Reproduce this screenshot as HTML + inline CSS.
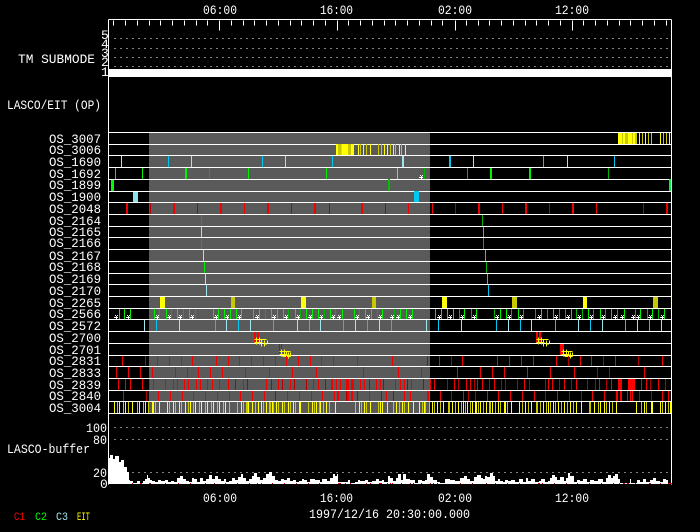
<!DOCTYPE html>
<html><head><meta charset="utf-8"><style>
html,body{margin:0;padding:0;background:#000;width:700px;height:532px;overflow:hidden}
svg{display:block}
text{font-family:"Liberation Mono","DejaVu Sans Mono",monospace;font-size:13px;fill:#fff}
path{fill:none;shape-rendering:crispEdges;stroke-width:1}
rect{shape-rendering:crispEdges}
.c{stroke:#00c8f0}.l{stroke:#a0e4ec}.g{stroke:#00f000}.d{stroke:#00b400}
.r{stroke:#f00000}.k{stroke:#b00000}.y{stroke:#ffff00}.o{stroke:#c8c800}
.w{stroke-width:2}.n{stroke:#fff}
</style></head><body>
<svg width="700" height="532" viewBox="0 0 700 532" xmlns="http://www.w3.org/2000/svg">
<rect x="149" y="132" width="281" height="281" fill="#5a5a5a"/>
<rect x="109" y="69" width="562" height="8" fill="#fff"/>
<g transform="translate(.5 .5)">
<path class="n" d="M108 19V484M671 19V484M108 19H671"/>
<path class="n" d="M113 20v5M125 20v5M137 20v5M149 20v5M160 20v5M172 20v5M184 20v5M196 20v5M207 20v5M219 20v10M231 20v5M243 20v5M254 20v5M266 20v5M278 20v5M290 20v5M301 20v5M313 20v5M325 20v5M337 20v10M348 20v5M360 20v5M372 20v5M384 20v5M395 20v5M407 20v5M419 20v5M431 20v5M442 20v5M455 20v10M466 20v5M478 20v5M489 20v5M501 20v5M513 20v5M525 20v5M536 20v5M548 20v5M560 20v5M572 20v10M583 20v5M595 20v5M607 20v5M619 20v5M630 20v5M642 20v5M654 20v5M666 20v5"/>
<path class="n" stroke-dasharray="1 5" d="M114 38H671M114 48H671M114 57H671M114 66H671M114 427H671M114 439H671M114 472H671"/>
<path class="n" d="M108 132H671M108 144H671M108 155H671M108 167H671M108 179H671M108 191H671M108 202H671M108 214H671M108 226H671M108 237H671M108 249H671M108 261H671M108 273H671M108 284H671M108 296H671M108 308H671M108 319H671M108 331H671M108 343H671M108 355H671M108 366H671M108 378H671M108 390H671M108 401H671M108 413H671"/>
</g>

<!-- OS_3007 -->
<rect x="618" y="133" width="19" height="11" fill="#ff0"/>
<rect x="622" y="133" width="1" height="11" fill="#c8c800"/><rect x="625" y="133" width="3" height="11" fill="#c8c800"/><rect x="632" y="133" width="1" height="11" fill="#c8c800"/><rect x="635" y="133" width="2" height="11" fill="#c8c800"/>
<g transform="translate(.5 133)"><path class="y" d="M639 0v11M645 0v11M660 0v11M669 0v11"/><path class="o" d="M642 0v11M648 0v11M651 0v11M663 0v11M666 0v11"/></g>
<!-- OS_3006 -->
<rect x="336" y="144" width="18" height="11" fill="#ff0"/>
<rect x="338" y="144" width="3" height="11" fill="#c8c800"/><rect x="341" y="144" width="1" height="11" fill="#e4e400"/><rect x="348" y="144" width="3" height="11" fill="#c8c800"/>
<g transform="translate(.5 144)"><path class="y" d="M358 0v11M363 0v11M370 0v11M384 0v11M387 0v11M393 0v11M399 0v11M405 0v11"/><path class="o" d="M360 0v11M366 0v11M378 0v11M381 0v11M390 0v11M395 0v11M401 0v11"/></g>
<!-- OS_1690 -->
<g transform="translate(.5 156)"><path class="l" d="M121 0v11M191 0v11M285 0v11M473 0v11M567 0v11"/><path class="c" d="M168 0v11M262 0v11M332 0v11M543 0v11M614 0v11"/><path class="l w" d="M402.500 0v11"/><path class="c w" d="M449.500 0v11"/></g>
<!-- OS_1692 -->
<g transform="translate(.5 168)"><path class="g" d="M115 0v11M142 0v11M248 0v11M326 0v11"/><path class="d" d="M209 0v11M424 0v11M467 0v11M608 0v11"/><path style="stroke:#70e070" d="M397 0v11"/><path class="g w" d="M185.500 0v11M490.500 0v11M529.500 0v11"/></g>
<!-- OS_1899 / 1900 -->
<rect x="111" y="180" width="3" height="11" fill="#0f0"/><rect x="388" y="179" width="2" height="12" fill="#00c000"/><rect x="669" y="179" width="2" height="12" fill="#00f040"/>
<rect x="133" y="192" width="5" height="10" fill="#8ce0e8"/><rect x="414" y="191" width="5" height="11" fill="#00c8f0"/>
<!-- OS_2048 -->
<g transform="translate(.5 203)"><path class="r" d="M244 0v11M408 0v11M432 0v11M502 0v11M596 0v11"/><path class="k" d="M150 0v11M197 0v11M291 0v11M329 0v11M385 0v11M455 0v11M549 0v11M643 0v11"/><path class="r w" d="M126.500 0v11M173.500 0v11M220.500 0v11M267.500 0v11M314.500 0v11M361.500 0v11M478.500 0v11M525.500 0v11M572.500 0v11M666.500 0v11"/></g>
<!-- OS_2164..2170 -->
<path class="d" d="M201.500 215V226M482.500 215V226"/>
<path class="l" d="M201.500 227V237"/><path class="c" d="M483.500 227V237"/>
<path class="d" d="M201.500 238V249M483.500 238V249"/>
<path class="l" d="M203.500 250V261"/><path class="c" d="M485.500 250V261"/>
<path class="g" d="M204.500 262V273"/><path class="d" d="M486.500 262V273"/>
<path class="l" d="M205.500 274V284"/><path class="c" d="M487.500 274V284"/>
<path class="l" d="M206.500 285V296"/><path class="c" d="M488.500 285V296"/>
<!-- OS_2265 -->
<g fill="#ff0"><rect x="160" y="297" width="5" height="11"/><rect x="301" y="297" width="5" height="11"/><rect x="442" y="297" width="5" height="11"/><rect x="583" y="297" width="4" height="11"/></g>
<g fill="#c8c800"><rect x="231" y="297" width="4" height="11"/><rect x="372" y="297" width="4" height="11"/><rect x="512" y="297" width="5" height="11"/><rect x="653" y="297" width="5" height="11"/></g>
<!-- OS_2566 -->
<g transform="translate(.5 309)"><path class="g" d="M119 0v10M124 0v10M130 0v10M154 0v10M166 0v10M177 0v10M189 0v10M213 0v10M218 0v10M224 0v10M230 0v10M236 0v10M241 0v10M253 0v10M259 0v10M271 0v10M277 0v10M283 0v10M295 0v10M306 0v10M312 0v10M318 0v10M330 0v10M342 0v10M354 0v10M365 0v10M371 0v10M382 0v10M400 0v10M406 0v10M412 0v10M435 0v10M441 0v10M447 0v10M453 0v10M464 0v10M476 0v10M500 0v10M506 0v10M518 0v10M541 0v10M553 0v10M571 0v10M588 0v10M600 0v10M611 0v10M624 0v10M640 0v10M652 0v10M664 0v10"/><path class="d" d="M159 0v10M171 0v10M183 0v10M195 0v10M265 0v10M288 0v10M300 0v10M324 0v10M335 0v10M359 0v10M377 0v10M394 0v10M459 0v10M471 0v10M494 0v10M511 0v10M523 0v10M535 0v10M547 0v10M559 0v10M565 0v10M576 0v10M582 0v10M593 0v10M605 0v10M617 0v10M635 0v10M647 0v10M658 0v10"/></g>
<g transform="translate(0 .5)"><path class="n" d="M116 317m-1-2h1m1 0h1m-2 1h1m-3 1h4m-2 1h1m-2 1h1m1 0h1M128 317m-1-2h1m1 0h1m-2 1h1m-3 1h4m-2 1h1m-2 1h1m1 0h1M157 317m-1-2h1m1 0h1m-2 1h1m-3 1h4m-2 1h1m-2 1h1m1 0h1M169 317m-1-2h1m1 0h1m-2 1h1m-3 1h4m-2 1h1m-2 1h1m1 0h1M180 317m-1-2h1m1 0h1m-2 1h1m-3 1h4m-2 1h1m-2 1h1m1 0h1M192 317m-1-2h1m1 0h1m-2 1h1m-3 1h4m-2 1h1m-2 1h1m1 0h1M216 317m-1-2h1m1 0h1m-2 1h1m-3 1h4m-2 1h1m-2 1h1m1 0h1M227 317m-1-2h1m1 0h1m-2 1h1m-3 1h4m-2 1h1m-2 1h1m1 0h1M239 317m-1-2h1m1 0h1m-2 1h1m-3 1h4m-2 1h1m-2 1h1m1 0h1M257 317m-1-2h1m1 0h1m-2 1h1m-3 1h4m-2 1h1m-2 1h1m1 0h1M274 317m-1-2h1m1 0h1m-2 1h1m-3 1h4m-2 1h1m-2 1h1m1 0h1M286 317m-1-2h1m1 0h1m-2 1h1m-3 1h4m-2 1h1m-2 1h1m1 0h1M298 317m-1-2h1m1 0h1m-2 1h1m-3 1h4m-2 1h1m-2 1h1m1 0h1M310 317m-1-2h1m1 0h1m-2 1h1m-3 1h4m-2 1h1m-2 1h1m1 0h1M321 317m-1-2h1m1 0h1m-2 1h1m-3 1h4m-2 1h1m-2 1h1m1 0h1M333 317m-1-2h1m1 0h1m-2 1h1m-3 1h4m-2 1h1m-2 1h1m1 0h1M339 317m-1-2h1m1 0h1m-2 1h1m-3 1h4m-2 1h1m-2 1h1m1 0h1M357 317m-1-2h1m1 0h1m-2 1h1m-3 1h4m-2 1h1m-2 1h1m1 0h1M368 317m-1-2h1m1 0h1m-2 1h1m-3 1h4m-2 1h1m-2 1h1m1 0h1M380 317m-1-2h1m1 0h1m-2 1h1m-3 1h4m-2 1h1m-2 1h1m1 0h1M392 317m-1-2h1m1 0h1m-2 1h1m-3 1h4m-2 1h1m-2 1h1m1 0h1M398 317m-1-2h1m1 0h1m-2 1h1m-3 1h4m-2 1h1m-2 1h1m1 0h1M410 317m-1-2h1m1 0h1m-2 1h1m-3 1h4m-2 1h1m-2 1h1m1 0h1M439 317m-1-2h1m1 0h1m-2 1h1m-3 1h4m-2 1h1m-2 1h1m1 0h1M450 317m-1-2h1m1 0h1m-2 1h1m-3 1h4m-2 1h1m-2 1h1m1 0h1M462 317m-1-2h1m1 0h1m-2 1h1m-3 1h4m-2 1h1m-2 1h1m1 0h1M474 317m-1-2h1m1 0h1m-2 1h1m-3 1h4m-2 1h1m-2 1h1m1 0h1M497 317m-1-2h1m1 0h1m-2 1h1m-3 1h4m-2 1h1m-2 1h1m1 0h1M509 317m-1-2h1m1 0h1m-2 1h1m-3 1h4m-2 1h1m-2 1h1m1 0h1M521 317m-1-2h1m1 0h1m-2 1h1m-3 1h4m-2 1h1m-2 1h1m1 0h1M539 317m-1-2h1m1 0h1m-2 1h1m-3 1h4m-2 1h1m-2 1h1m1 0h1M556 317m-1-2h1m1 0h1m-2 1h1m-3 1h4m-2 1h1m-2 1h1m1 0h1M568 317m-1-2h1m1 0h1m-2 1h1m-3 1h4m-2 1h1m-2 1h1m1 0h1M579 317m-1-2h1m1 0h1m-2 1h1m-3 1h4m-2 1h1m-2 1h1m1 0h1M591 317m-1-2h1m1 0h1m-2 1h1m-3 1h4m-2 1h1m-2 1h1m1 0h1M603 317m-1-2h1m1 0h1m-2 1h1m-3 1h4m-2 1h1m-2 1h1m1 0h1M615 317m-1-2h1m1 0h1m-2 1h1m-3 1h4m-2 1h1m-2 1h1m1 0h1M622 317m-1-2h1m1 0h1m-2 1h1m-3 1h4m-2 1h1m-2 1h1m1 0h1M633 317m-1-2h1m1 0h1m-2 1h1m-3 1h4m-2 1h1m-2 1h1m1 0h1M638 317m-1-2h1m1 0h1m-2 1h1m-3 1h4m-2 1h1m-2 1h1m1 0h1M650 317m-1-2h1m1 0h1m-2 1h1m-3 1h4m-2 1h1m-2 1h1m1 0h1M662 317m-1-2h1m1 0h1m-2 1h1m-3 1h4m-2 1h1m-2 1h1m1 0h1M421 177m-1-2h1m1 0h1m-2 1h1m-3 1h4m-2 1h1m-2 1h1m1 0h1"/></g>
<!-- OS_2572 -->
<g transform="translate(.5 320)"><path class="l" d="M144 0v11M179 0v11M226 0v11M250 0v11M297 0v11M320 0v11M355 0v11M379 0v11M426 0v11M461 0v11M508 0v11M531 0v11M578 0v11M602 0v11M637 0v11M661 0v11"/><path class="c" d="M156 0v11M215 0v11M238 0v11M273 0v11M309 0v11M343 0v11M367 0v11M391 0v11M438 0v11M496 0v11M520 0v11M555 0v11M590 0v11M625 0v11M649 0v11"/></g>
<!-- OS_2700 / 2701 red -->
<g fill="#f00"><rect x="254" y="332" width="2" height="11"/><rect x="257" y="332" width="2" height="11"/><rect x="536" y="332" width="2" height="11"/><rect x="539" y="332" width="2" height="11"/></g>
<g fill="#d00000"><rect x="279" y="344" width="1" height="10"/><rect x="281" y="344" width="1" height="10"/></g>
<rect x="560" y="344" width="4" height="11" fill="#f00"/>
<!-- glyphs -->
<g transform="translate(.5 .5)"><path class="y" d="M254 339H263M254 342H262M256 337V344M259 337V344M261 339V346M264 340V346M263 339H266M267 340V343M265 344H266"/>
<path class="y" d="M536 339H545M536 342H544M538 337V344M541 337V344M543 339V346M546 340V346M545 339H548M549 340V343M547 344H548"/>
<path class="y" d="M279 351H288M279 354H287M281 349V356M284 349V356M286 351V358M288 352V358M282 356H290M290 352V356M287 351H290"/>
<path class="y" d="M561 351H570M561 354H569M563 349V356M566 349V356M568 351V358M570 352V358M564 356H572M572 352V356M569 351H572"/></g>
<!-- OS_2831 -->
<g transform="translate(.5 356)"><path class="r" d="M122 0v10M157 0v10M169 0v10M181 0v10M192 0v10M216 0v10M228 0v10M239 0v10M251 0v10M263 0v10M275 0v10M286 0v10M298 0v10M310 0v10M321 0v10M333 0v10M357 0v10M392 0v10M439 0v10M462 0v10M497 0v10M509 0v10M521 0v10M533 0v10M556 0v10M580 0v10M591 0v10M615 0v10M662 0v10"/><path class="k" d="M145 0v10M427 0v10M451 0v10M568 0v10M603 0v10M638 0v10"/></g>
<!-- OS_2833 -->
<g transform="translate(.5 367)"><path class="r" d="M116 0v11M128 0v11M140 0v11M152 0v11M175 0v11M187 0v11M198 0v11M210 0v11M222 0v11M245 0v11M269 0v11M292 0v11M316 0v11M363 0v11M398 0v11M421 0v11M457 0v11M480 0v11M492 0v11M504 0v11M527 0v11M550 0v11M574 0v11M644 0v11"/><path class="k" d="M597 0v11M609 0v11"/></g>
<!-- OS_2839 -->
<g transform="translate(.5 379)"><path class="r" d="M118 0v11M125 0v11M130 0v11M142 0v11M149 0v11M153 0v11M165 0v11M173 0v11M177 0v11M184 0v11M188 0v11M196 0v11M200 0v11M207 0v11M212 0v11M219 0v11M228 0v11M243 0v11M266 0v11M278 0v11M290 0v11M313 0v11M318 0v11M331 0v11M336 0v11M340 0v11M346 0v11M348 0v11M351 0v11M353 0v11M360 0v11M364 0v11M376 0v11M380 0v11M395 0v11M400 0v11M404 0v11M411 0v11M430 0v11M434 0v11M454 0v11M466 0v11M470 0v11M477 0v11M482 0v11M494 0v11M524 0v11M548 0v11M552 0v11M564 0v11M576 0v11M599 0v11M611 0v11M618 0v11M621 0v11M641 0v11M646 0v11M658 0v11"/><path class="k" d="M235 0v11M247 0v11M271 0v11M282 0v11M294 0v11M306 0v11M325 0v11M369 0v11M383 0v11M407 0v11M423 0v11M447 0v11M458 0v11M474 0v11M489 0v11M501 0v11M505 0v11M517 0v11M529 0v11M545 0v11M559 0v11M571 0v11M587 0v11M595 0v11M606 0v11M650 0v11M665 0v11"/><path class="r w" d="M331.500 0v11M346.500 0v11M352.500 0v11M619.500 0v11"/></g>
<rect x="628" y="379" width="7" height="11" fill="#f00"/>
<!-- OS_2840 -->
<g transform="translate(.5 391)"><path class="r" d="M123 0v10M158 0v10M170 0v10M182 0v10M193 0v10M205 0v10M217 0v10M229 0v10M240 0v10M252 0v10M264 0v10M287 0v10M299 0v10M311 0v10M322 0v10M334 0v10M338 0v10M348 0v10M352 0v10M369 0v10M386 0v10M404 0v10M410 0v10M428 0v10M440 0v10M463 0v10M487 0v10M498 0v10M510 0v10M522 0v10M534 0v10M557 0v10M592 0v10M604 0v10M616 0v10M620 0v10M627 0v10M630 0v10M632 0v10M662 0v10M668 0v10"/><path class="k" d="M146 0v10M275 0v10M346 0v10M357 0v10M381 0v10M393 0v10M451 0v10M468 0v10M475 0v10M545 0v10M569 0v10M581 0v10M639 0v10M651 0v10"/><path class="r w" d="M337.500 0v10M347.500 0v10M351.500 0v10M427.500 0v10M616.500 0v10M620.500 0v10"/></g>
<!-- OS_3004 -->
<g transform="translate(.5 402)"><path class="y" d="M114 0v11M119 0v11M125 0v11M132 0v11M139 0v11M145 0v11M152 0v11M153 0v11M159 0v11M167 0v11M173 0v11M179 0v11M185 0v11M190 0v11M195 0v11M201 0v11M207 0v11M213 0v11M219 0v11M225 0v11M241 0v11M246 0v11M248 0v11M252 0v11M258 0v11M261 0v11M266 0v11M272 0v11M276 0v11M282 0v11M288 0v11M293 0v11M299 0v11M300 0v11M312 0v11M316 0v11M320 0v11M326 0v11M335 0v11M359 0v11M364 0v11M370 0v11M380 0v11M382 0v11M387 0v11M396 0v11M402 0v11M408 0v11M413 0v11M419 0v11M424 0v11M432 0v11M437 0v11M443 0v11M452 0v11M458 0v11M463 0v11M467 0v11M472 0v11M475 0v11M476 0v11M480 0v11M486 0v11M492 0v11M498 0v11M504 0v11M505 0v11M511 0v11M519 0v11M525 0v11M531 0v11M537 0v11M543 0v11M548 0v11M553 0v11M558 0v11M564 0v11M570 0v11M576 0v11M581 0v11M589 0v11M594 0v11M600 0v11M604 0v11M609 0v11M616 0v11M636 0v11M644 0v11M651 0v11M652 0v11M660 0v11M665 0v11M670 0v11"/><path class="o" d="M117 0v11M123 0v11M128 0v11M137 0v11M143 0v11M148 0v11M155 0v11M169 0v11M175 0v11M181 0v11M188 0v11M193 0v11M199 0v11M205 0v11M211 0v11M217 0v11M223 0v11M229 0v11M237 0v11M243 0v11M255 0v11M263 0v11M269 0v11M273 0v11M278 0v11M284 0v11M290 0v11M295 0v11M308 0v11M314 0v11M319 0v11M323 0v11M329 0v11M355 0v11M361 0v11M366 0v11M378 0v11M393 0v11M399 0v11M404 0v11M422 0v11M425 0v11M429 0v11M434 0v11M440 0v11M448 0v11M449 0v11M455 0v11M461 0v11M465 0v11M470 0v11M478 0v11M483 0v11M489 0v11M490 0v11M495 0v11M500 0v11M507 0v11M522 0v11M528 0v11M536 0v11M540 0v11M546 0v11M550 0v11M555 0v11M561 0v11M567 0v11M573 0v11M590 0v11M598 0v11M606 0v11M612 0v11M641 0v11M646 0v11M662 0v11M668 0v11"/><path class="y w" d="M152.500 0v11M299.500 0v11M475.500 0v11M504.500 0v11M651.500 0v11"/><path class="o w" d="M246.500 0v11M269.500 0v11M489.500 0v11M536.500 0v11M589.500 0v11"/></g>
<!-- buffer -->
<path style="fill:#fff;stroke:none" d="M109 484V458H110V455H113V459H115V456H119V462H121V460H124V467H127V472H129V480H130V481H133V483H137V481H140V483H143V481H145V479H147V475H148V478H150V480H152V481H155V482H158V480H161V481H165V480H168V482H171V481H174V482H177V478H180V476H183V479H186V481H189V482H192V478H194V479H197V482H200V478H203V481H206V479H209V475H212V479H215V476H218V479H221V481H224V479H226V482H229V481H232V478H235V480H238V477H241V474H243V478H246V481H249V479H252V476H254V473H257V477H260V480H263V478H266V474H269V472H272V476H275V480H278V481H281V479H284V480H287V478H290V481H293V480H296V482H299V481H302V479H304V480H307V482H310V479H315V480H320V482H322V479H327V481H330V478H333V474H335V476H337V474H338V482H348V480H350V483H355V482H358V480H360V481H365V480H368V482H372V481H376V479H379V481H382V480H384V482H388V476H390V478H393V481H396V478H398V474H401V480H403V474H406V479H410V480H415V483H418V480H422V481H425V480H427V474H430V477H433V480H437V482H440V483H445V479H450V480H455V481H460V478H464V476H467V479H470V481H474V477H477V475H481V478H483V479H485V476H487V477H490V473H493V476H495V481H498V479H500V481H503V482H505V480H508V481H511V480H515V482H519V479H523V482H526V478H528V481H531V479H535V482H539V481H541V479H545V482H548V481H550V478H552V475H555V477H557V480H560V477H564V481H566V478H568V473H570V476H574V482H577V480H580V481H583V479H587V482H590V480H594V481H598V479H603V482H606V478H608V475H611V478H613V476H615V474H618V479H620V483H630V479H631V483H637V480H640V482H643V479H646V482H650V480H653V478H656V481H660V482H663V479H666V480H668V483H671V484Z"/>
<g fill="#d00000"><rect x="132" y="483" width="1" height="1"/><rect x="140" y="483" width="2" height="1"/><rect x="149" y="483" width="2" height="1"/><rect x="165" y="483" width="1" height="1"/><rect x="178" y="483" width="1" height="1"/><rect x="190" y="483" width="1" height="1"/><rect x="205" y="483" width="1" height="1"/><rect x="214" y="483" width="1" height="1"/><rect x="225" y="483" width="1" height="1"/><rect x="237" y="483" width="1" height="1"/><rect x="249" y="483" width="1" height="1"/><rect x="257" y="483" width="1" height="1"/><rect x="261" y="483" width="1" height="1"/><rect x="272" y="483" width="1" height="1"/><rect x="284" y="483" width="1" height="1"/><rect x="296" y="483" width="1" height="1"/><rect x="308" y="483" width="1" height="1"/><rect x="319" y="483" width="1" height="1"/><rect x="338" y="483" width="3" height="1"/><rect x="345" y="483" width="1" height="1"/><rect x="350" y="483" width="1" height="1"/><rect x="366" y="483" width="1" height="1"/><rect x="370" y="483" width="1" height="1"/><rect x="379" y="483" width="3" height="1"/><rect x="387" y="483" width="1" height="1"/><rect x="390" y="483" width="1" height="1"/><rect x="392" y="483" width="1" height="1"/><rect x="401" y="483" width="1" height="1"/><rect x="410" y="483" width="1" height="1"/><rect x="413" y="483" width="1" height="1"/><rect x="421" y="483" width="1" height="1"/><rect x="430" y="483" width="1" height="1"/><rect x="433" y="483" width="1" height="1"/><rect x="437" y="483" width="1" height="1"/><rect x="460" y="483" width="1" height="1"/><rect x="472" y="483" width="1" height="1"/><rect x="486" y="483" width="1" height="1"/><rect x="495" y="483" width="1" height="1"/><rect x="507" y="483" width="1" height="1"/><rect x="519" y="483" width="1" height="1"/><rect x="538" y="483" width="2" height="1"/><rect x="542" y="483" width="1" height="1"/><rect x="554" y="483" width="1" height="1"/><rect x="566" y="483" width="1" height="1"/><rect x="577" y="483" width="1" height="1"/><rect x="589" y="483" width="1" height="1"/><rect x="601" y="483" width="1" height="1"/><rect x="613" y="483" width="1" height="1"/><rect x="619" y="483" width="1" height="1"/><rect x="623" y="483" width="2" height="1"/><rect x="627" y="483" width="2" height="1"/><rect x="635" y="483" width="1" height="1"/><rect x="649" y="483" width="2" height="1"/><rect x="660" y="483" width="1" height="1"/><rect x="668" y="483" width="4" height="1"/></g>

<!-- text -->
<g>
<text x="203" y="14" textLength="34" lengthAdjust="spacingAndGlyphs">06:00</text>
<text x="320" y="14" textLength="33" lengthAdjust="spacingAndGlyphs">16:00</text>
<text x="438" y="14" textLength="34" lengthAdjust="spacingAndGlyphs">02:00</text>
<text x="555" y="14" textLength="34" lengthAdjust="spacingAndGlyphs">12:00</text>
<text x="203" y="502" textLength="34" lengthAdjust="spacingAndGlyphs">06:00</text>
<text x="320" y="502" textLength="33" lengthAdjust="spacingAndGlyphs">16:00</text>
<text x="438" y="502" textLength="34" lengthAdjust="spacingAndGlyphs">02:00</text>
<text x="555" y="502" textLength="34" lengthAdjust="spacingAndGlyphs">12:00</text>
<text x="309" y="518" textLength="161" lengthAdjust="spacingAndGlyphs">1997/12/16 20:30:00.000</text>
<text x="18" y="63" textLength="77" lengthAdjust="spacingAndGlyphs">TM SUBMODE</text>
<text x="7" y="109" textLength="94" lengthAdjust="spacingAndGlyphs">LASCO/EIT (OP)</text>
<text x="101" y="39">5</text><text x="101" y="48">4</text><text x="101" y="57">3</text><text x="101" y="66">2</text><text x="101" y="76">1</text>
<text x="49" y="143" textLength="52" lengthAdjust="spacingAndGlyphs">OS_3007</text>
<text x="49" y="154" textLength="52" lengthAdjust="spacingAndGlyphs">OS_3006</text>
<text x="49" y="166" textLength="52" lengthAdjust="spacingAndGlyphs">OS_1690</text>
<text x="49" y="178" textLength="52" lengthAdjust="spacingAndGlyphs">OS_1692</text>
<text x="49" y="189" textLength="52" lengthAdjust="spacingAndGlyphs">OS_1899</text>
<text x="49" y="201" textLength="52" lengthAdjust="spacingAndGlyphs">OS_1900</text>
<text x="49" y="213" textLength="52" lengthAdjust="spacingAndGlyphs">OS_2048</text>
<text x="49" y="225" textLength="52" lengthAdjust="spacingAndGlyphs">OS_2164</text>
<text x="49" y="236" textLength="52" lengthAdjust="spacingAndGlyphs">OS_2165</text>
<text x="49" y="247" textLength="52" lengthAdjust="spacingAndGlyphs">OS_2166</text>
<text x="49" y="260" textLength="52" lengthAdjust="spacingAndGlyphs">OS_2167</text>
<text x="49" y="271" textLength="52" lengthAdjust="spacingAndGlyphs">OS_2168</text>
<text x="49" y="283" textLength="52" lengthAdjust="spacingAndGlyphs">OS_2169</text>
<text x="49" y="295" textLength="52" lengthAdjust="spacingAndGlyphs">OS_2170</text>
<text x="49" y="307" textLength="52" lengthAdjust="spacingAndGlyphs">OS_2265</text>
<text x="49" y="318" textLength="52" lengthAdjust="spacingAndGlyphs">OS_2566</text>
<text x="49" y="330" textLength="52" lengthAdjust="spacingAndGlyphs">OS_2572</text>
<text x="49" y="342" textLength="52" lengthAdjust="spacingAndGlyphs">OS_2700</text>
<text x="49" y="354" textLength="52" lengthAdjust="spacingAndGlyphs">OS_2701</text>
<text x="49" y="365" textLength="52" lengthAdjust="spacingAndGlyphs">OS_2831</text>
<text x="49" y="377" textLength="52" lengthAdjust="spacingAndGlyphs">OS_2833</text>
<text x="49" y="389" textLength="52" lengthAdjust="spacingAndGlyphs">OS_2839</text>
<text x="49" y="400" textLength="52" lengthAdjust="spacingAndGlyphs">OS_2840</text>
<text x="49" y="412" textLength="52" lengthAdjust="spacingAndGlyphs">OS_3004</text>
<text x="86" y="432" textLength="21" lengthAdjust="spacingAndGlyphs">100</text>
<text x="93" y="444" textLength="14" lengthAdjust="spacingAndGlyphs">80</text>
<text x="7" y="453" textLength="83" lengthAdjust="spacingAndGlyphs">LASCO-buffer</text>
<text x="93" y="477" textLength="14" lengthAdjust="spacingAndGlyphs">20</text>
<text x="100" y="488">0</text>
<text x="14" y="520" textLength="11" lengthAdjust="spacingAndGlyphs" style="fill:#f00;font-size:11px">C1</text>
<text x="35" y="520" textLength="12" lengthAdjust="spacingAndGlyphs" style="fill:#0f0;font-size:11px">C2</text>
<text x="56" y="520" textLength="12" lengthAdjust="spacingAndGlyphs" style="fill:#a0e4ec;font-size:11px">C3</text>
<text x="77" y="520" textLength="13" lengthAdjust="spacingAndGlyphs" style="fill:#ff0;font-size:11px">EIT</text>
</g>
</svg>
</body></html>
